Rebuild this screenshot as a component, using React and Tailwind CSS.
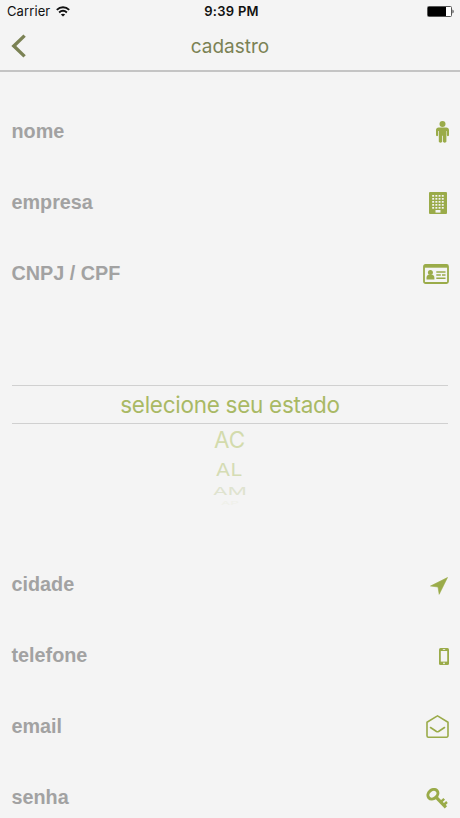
import React from 'react';

const PersonIcon = () => (
  <svg className="w-[13px] h-[22px]" viewBox="0 0 13 22" fill="currentColor">
    <circle cx="6.5" cy="3" r="3" />
    <path d="M2.6 6.6h7.8c1.5 0 2.6 1 2.6 2.5v5c0 1.6-2.1 1.6-2.1 0v-4h-.5v10.5c0 1.4-3.4 1.4-3.4 0v-5.9h-.8v5.9c0 1.4-3.4 1.4-3.4 0V10.1h-.7v4c0 1.6-2.1 1.6-2.1 0v-5c0-1.5 1.1-2.5 2.6-2.5z" />
  </svg>
);

const BuildingIcon = () => (
  <svg className="w-[18px] h-[22px] mr-0.5" viewBox="0 0 18 22">
    <rect width="18" height="22" rx="1" fill="currentColor" />
    <g fill="#f4f4f4">
      {[3, 6, 9, 12, 15].map((y) =>
        [3.2, 6.4, 9.6, 12.8].map((x) => <rect key={`${x}-${y}`} x={x} y={y} width="1.9" height="1.7" />)
      )}
      <rect x="6.5" y="18" width="5" height="2.6" />
    </g>
  </svg>
);

const CardIcon = () => (
  <svg className="w-[26px] h-[20px]" viewBox="0 0 26 20" fill="none" stroke="currentColor">
    <rect x="1" y="1" width="24" height="18" rx="1.5" strokeWidth="1.8" />
    <path d="M1 2.3h24" strokeWidth="2.8" />
    <circle cx="7.4" cy="8.5" r="2.5" fill="currentColor" stroke="none" />
    <path d="M3.5 15.5v-1.7c0-2 1.3-3 2.3-3h3.2c1.2 0 2.4 1 2.4 3v1.7z" fill="currentColor" stroke="none" />
    <path d="M13.3 8h9.2M13.3 11h4.5M19 11h3.5M13.3 14.3h9.2" strokeWidth="1.4" />
  </svg>
);

const ArrowIcon = () => (
  <svg className="w-[18px] h-[18px] mt-0.5 mr-px" viewBox="0 0 18 18" fill="currentColor" stroke="currentColor" strokeWidth=".6" strokeLinejoin="round">
    <path d="M17.5.5 9.2 17.3 8 10 .5 9z" />
  </svg>
);

const PhoneIcon = () => (
  <svg className="w-[10px] h-[17px] mt-0.5" viewBox="0 0 10 17">
    <rect width="10" height="17" rx="1.5" fill="currentColor" />
    <rect x="1.8" y="3" width="6.4" height="10.6" fill="#f4f4f4" />
    <path d="M3.8 1.5h2.4" stroke="#f4f4f4" strokeWidth=".8" />
    <circle cx="5" cy="15.3" r=".9" fill="#f4f4f4" />
  </svg>
);

const MailIcon = () => (
  <svg className="w-[23px] h-[23px]" viewBox="0 0 23 23" fill="none" stroke="currentColor" strokeWidth="1.6" strokeLinecap="round" strokeLinejoin="round">
    <path d="M1 7.3 11 1.1a.9.9 0 0 1 1 0L22 7.3v13.5a1.4 1.4 0 0 1-1.4 1.4H2.4A1.4 1.4 0 0 1 1 20.8z" />
    <path d="m4.5 12.5 6 4q1 .6 2 0l6-4" />
  </svg>
);

const KeyIcon = () => (
  <svg className="w-[22px] h-[21px] mr-px mt-0.5" viewBox="0 0 22 21" fill="none" stroke="currentColor">
    <ellipse cx="6.9" cy="6.2" rx="5.4" ry="4.3" strokeWidth="3" transform="rotate(-40 6.9 6.2)" />
    <path d="M10 9.2 19.9 19.4" strokeWidth="3.2" />
    <path d="m14.6 14.2 3.6-3.4M17.7 17l3.3-3" strokeWidth="2.4" />
  </svg>
);

const Field = ({ label, children }) => (
  <label className="h-[71px] pl-[11.5px] pr-[11px] flex items-center justify-between text-[#9aab49]">
    <span className="text-[19.8px] leading-6 font-bold text-[#a2a2a2] -mt-0.5">{label}</span>
    {children}
  </label>
);

const StatusBar = () => (
  <div className="h-6 pl-[7px] pr-[6px] grid grid-cols-3 items-center text-[13px] text-[#111]">
    <div className="flex items-center gap-1.5">
      <span className="font-['Inter'] tracking-[0.1px]">Carrier</span>
      <svg className="w-[14px] h-[11px] -mt-0.5" viewBox="0 0 14 11" fill="none" stroke="currentColor" strokeWidth="1.9">
        <path d="M.8 3.9c3.6-3.5 8.8-3.5 12.4 0M3.1 6.5c2.3-2.1 5.5-2.1 7.8 0" />
        <path d="M7 10.6 4.8 8.5c1.2-1.1 3.2-1.1 4.4 0z" fill="currentColor" stroke="none" />
      </svg>
    </div>
    <span className="text-center font-['Inter'] font-semibold tracking-[0.27px] pl-0.5">9:39 PM</span>
    <svg className="w-[27px] h-[11px] justify-self-end -mt-px" viewBox="0 0 27 11">
      <rect x=".5" y=".5" width="24" height="10" rx="1" fill="#fff" stroke="#555" />
      <rect x="1" y="1" width="18" height="9" fill="#000" />
      <path d="M25.5 3.5c1.5.5 1.5 3.5 0 4z" fill="#333" />
    </svg>
  </div>
);

const Header = () => (
  <header className="h-[72px] border-b-2 border-[#c4c4c4] font-['Inter']">
    <StatusBar />
    <div className="h-[46px] px-[11px] grid grid-cols-3 items-center text-[#7b8254]">
      <svg className="w-[15px] h-[24px] -mt-0.5" viewBox="0 0 15 24" fill="none" stroke="currentColor" strokeWidth="3.4">
        <path d="M13.6 1.6 2.8 12l10.8 10.4" />
      </svg>
      <h1 className="text-center text-[19px] leading-6">cadastro</h1>
    </div>
  </header>
);

const StatePicker = () => (
  <div className="h-[240px] pt-[76px] px-3 font-['Inter'] text-[22.5px] text-center">
    <div className="h-[39px] border-y border-[#d0d0d0] flex items-center justify-center tracking-[-0.28px] text-[#a9b964]">
      selecione seu estado
    </div>
    <div className="h-[31px] pr-px flex items-center justify-center text-[#d3dbac]">AC</div>
    <div className="h-[29px] pr-px flex items-center justify-center text-[#d5dcb4]">
      <span className="block scale-x-[0.94] scale-y-[0.76]">AL</span>
    </div>
    <div className="h-[14px] pr-px flex items-center justify-center text-[#dfe3cf]">
      <span className="block scale-x-[0.94] scale-y-[0.48]">AM</span>
    </div>
    <div className="h-[10px] flex items-center justify-center text-[#eff0e9]">
      <span className="block scale-x-[0.6] scale-y-[0.22]">AP</span>
    </div>
  </div>
);

const App = () => {
  return (
    <div className="w-full h-[818px] overflow-hidden bg-[#f4f4f4] font-['Liberation_Sans',sans-serif]">
      <Header />
      <main className="pt-6">
        <Field label="nome"><PersonIcon /></Field>
        <Field label="empresa"><BuildingIcon /></Field>
        <Field label="CNPJ / CPF"><CardIcon /></Field>
        <StatePicker />
        <Field label="cidade"><ArrowIcon /></Field>
        <Field label="telefone"><PhoneIcon /></Field>
        <Field label="email"><MailIcon /></Field>
        <Field label="senha"><KeyIcon /></Field>
      </main>
    </div>
  );
};

export default App;
